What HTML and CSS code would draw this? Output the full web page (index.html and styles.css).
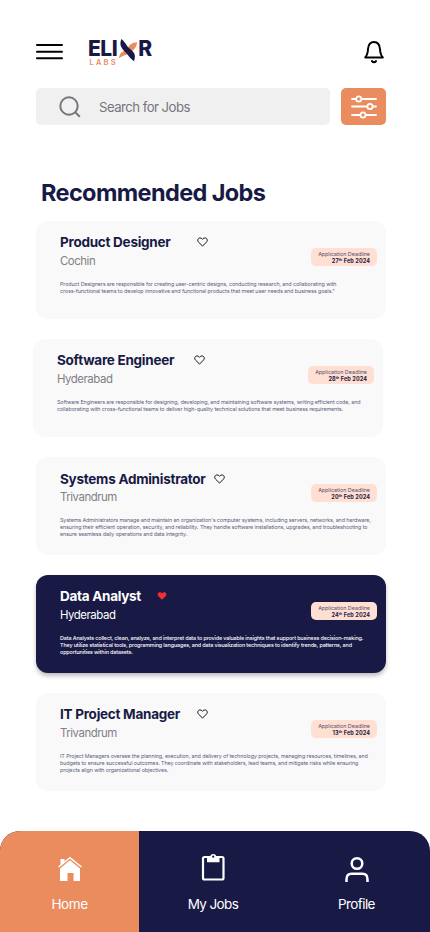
FILE: index.html
```html
<!DOCTYPE html>
<html lang="en">
<head>
<meta charset="utf-8">
<title>Elixr Labs Jobs</title>
<link rel="stylesheet" href="styles.css">
</head>
<body>
<svg class="defs" aria-hidden="true"><symbol id="heart" viewBox="0 0 12 11"><path d="M6 10 1.7 5.7C-.2 3.7 1 1 3.3 1 4.600 1 5.500 1.700 6 2.600 6.500 1.700 7.400 1 8.700 1 11 1 12.200 3.700 10.300 5.700Z"/></symbol></svg>
<header class="top">
  <svg class="menu" viewBox="0 0 27 17"><path d="M1 2h25M1 8.700h25M1 15.300h25"/></svg>
  <div class="logo">
    <div class="word"><span>ELI</span><svg class="x" viewBox="0 0 19 22"><path class="o" d="M18.300 3.200C13 3.500 10.500 5.500 9 9L5 12C2 13.500 .5 15 0 19.300 2.500 17 5 16.500 8 15.500L13.500 11.500C16.500 9.500 17.500 7 18.300 3.200Z"/><path class="n" d="M2.300 0C5 2 6.500 4.500 8.500 7.500 11 10.500 14 11.500 15.500 15 16.300 17.500 15.800 20 15 22.200 12.500 20.500 10.500 18.500 8.500 15.500 6 12.500 3.500 11 2 7.500 1 5 1.500 2.500 2.300 0Z"/></svg><span>R</span></div>
    <div class="labs">LABS</div>
  </div>
  <svg class="bell" viewBox="0 0 20 23"><path d="M1.200 16.400h17.600c-1.600-1.600-2.200-3.200-2.500-5.500L16 8C15.600 3.700 13.600 1.100 10 1.100S4.400 3.700 4 8l-.3 2.900c-.3 2.300-.9 3.900-2.500 5.500ZM8 20.100c1 1.500 3 1.500 4 0"/></svg>
</header>
<div class="searchrow">
  <div class="search">
    <svg viewBox="0 0 22 22"><circle cx="10" cy="10" r="8.700"/><path d="m16.200 16.200 4.600 4.600"/></svg>
    <span>Search for Jobs</span>
  </div>
  <div class="filter"><svg viewBox="0 0 26 23"><path d="M1 4h24M1 11.500h24M1 20h24"/><circle cx="7.700" cy="4" r="2.600"/><circle cx="19" cy="11.500" r="2.600"/><circle cx="12" cy="20" r="2.600"/></svg></div>
</div>
<h1>Recommended Jobs</h1>
<main class="jobs">
  <article class="card">
    <div class="head">
      <div><div class="title g1"><h2>Product Designer</h2><svg class="heart"><use href="#heart"/></svg></div><p class="city">Cochin</p></div>
      <div class="badge">Application Deadline<b>27<sup>th</sup> Feb 2024</b></div>
    </div>
    <p class="desc">Product Designers are responsible for creating user-centric designs, conducting research, and collaborating with<br>cross-functional teams to develop innovative and functional products that meet user needs and business goals."</p>
  </article>
  <article class="card shifted">
    <div class="head">
      <div><div class="title g2"><h2>Software Engineer</h2><svg class="heart"><use href="#heart"/></svg></div><p class="city">Hyderabad</p></div>
      <div class="badge">Application Deadline<b>28<sup>th</sup> Feb 2024</b></div>
    </div>
    <p class="desc">Software Engineers are responsible for designing, developing, and maintaining software systems, writing efficient code, and<br>collaborating with cross-functional teams to deliver high-quality technical solutions that meet business requirements.</p>
  </article>
  <article class="card low">
    <div class="head">
      <div><div class="title g3"><h2>Systems Administrator</h2><svg class="heart"><use href="#heart"/></svg></div><p class="city">Trivandrum</p></div>
      <div class="badge">Application Deadline<b>20<sup>th</sup> Feb 2024</b></div>
    </div>
    <p class="desc">Systems Administrators manage and maintain an organization's computer systems, including servers, networks, and hardware,<br>ensuring their efficient operation, security, and reliability. They handle software installations, upgrades, and troubleshooting to<br>ensure seamless daily operations and data integrity.</p>
  </article>
  <article class="card active">
    <div class="head">
      <div><div class="title g4"><h2>Data Analyst</h2><svg class="heart"><use href="#heart"/></svg></div><p class="city">Hyderabad</p></div>
      <div class="badge">Application Deadline<b>24<sup>th</sup> Feb 2024</b></div>
    </div>
    <p class="desc">Data Analysts collect, clean, analyze, and interpret data to provide valuable insights that support business decision-making.<br>They utilize statistical tools, programming languages, and data visualization techniques to identify trends, patterns, and<br>opportunities within datasets.</p>
  </article>
  <article class="card">
    <div class="head">
      <div><div class="title g5"><h2>IT Project Manager</h2><svg class="heart"><use href="#heart"/></svg></div><p class="city">Trivandrum</p></div>
      <div class="badge">Application Deadline<b>13<sup>th</sup> Feb 2024</b></div>
    </div>
    <p class="desc">IT Project Managers oversee the planning, execution, and delivery of technology projects, managing resources, timelines, and<br>budgets to ensure successful outcomes. They coordinate with stakeholders, lead teams, and mitigate risks while ensuring<br>projects align with organizational objectives.</p>
  </article>
</main>
<nav class="nav">
  <div class="tab on"><svg viewBox="0 0 28 28"><path class="fill" d="M4 13.500 14 5.200l10 8.300V26h-6.500v-8h-6v8H4Z"/><path class="fill" d="M4.500 4h4v4L4.500 11Z"/><path class="roof" d="M2.500 12 14 2.700 25.500 12"/></svg><span class="home">Home</span></div>
  <div class="tab"><svg class="clip" viewBox="0 0 28 28"><rect x="4" y="4" width="20.500" height="22.500" rx="1.500"/><path class="fill" d="M8 3.500h3.200c.5-3.300 5.600-3.300 6.100 0h3.200V9.200H8Z"/><circle class="hole" cx="14.200" cy="3.700" r="1.100"/></svg><span>My Jobs</span></div>
  <div class="tab"><svg viewBox="0 0 28 28"><circle cx="14" cy="8.500" r="5.300"/><path d="M3.500 27v-2.500c0-3.500 1.600-5.700 5-5.700h11c3.400 0 5 2.200 5 5.700V27"/></svg><span>Profile</span></div>
</nav>
</body>
</html>
```
FILE: styles.css
```css
*{box-sizing:border-box}
body{margin:0;width:430px;height:932px;background:#fff;color:#181a45;font-family:Inter,"Liberation Sans",sans-serif;overflow:hidden;display:flex;flex-direction:column}
h1,h2,p{margin:0}
svg{display:block;flex:none;overflow:visible}
.defs{width:0;height:0}
.top{height:88px;padding:38px 46px 0 36px;display:flex;align-items:flex-start}
.menu{width:27px;height:17px;margin-top:5px;stroke:#000;stroke-width:2;stroke-linecap:round}
.logo{margin-left:25px;width:70px}
.word{display:flex;height:21px;font-size:21px;line-height:22px;font-weight:800;letter-spacing:-.5px}
.x{width:19px;height:22px;margin:.5px 0 0 2px}
.x .o{fill:#ea8c5e}
.x .n{fill:#181a45}
.labs{font-size:7.500px;line-height:8px;letter-spacing:2.200px;color:#ea8c5e;font-weight:600;margin-left:1.500px}
.bell{width:20px;height:23px;margin:3px 0 0 auto;fill:none;stroke:#000;stroke-width:2;stroke-linecap:round;stroke-linejoin:round}
.searchrow{display:flex;gap:11px;padding:0 44px 0 36px;height:37px}
.search{width:294px;background:#f0f0f0;border-radius:5px;display:flex;align-items:center;padding-left:23px;color:#75767d;font-size:13.200px;letter-spacing:-.54px;gap:18px}
.search svg{width:22px;height:22px;fill:none;stroke:#75767d;stroke-width:2}
.filter{width:45px;background:#ea8c5e;border-radius:5px;display:flex;align-items:center;justify-content:center}
.filter svg{width:26px;height:23px;stroke:#fff;stroke-width:1.800;fill:#ea8c5e;stroke-linecap:round}
h1{font-size:23.500px;line-height:30px;font-weight:650;letter-spacing:-.62px;margin:53px 0 13px 41px}
.jobs{display:flex;flex-direction:column;gap:20px;padding-left:36px}
.card{width:350px;height:98px;background:#f9f9f9;border-radius:12px;padding:12px 9px 0 24px}
.card.shifted{margin-left:-3px}
.card.low .title{padding-top:1px;height:19px}
.card.low .city{margin-top:1px}
.head{display:flex;justify-content:space-between;height:36px}
.title{display:flex;align-items:center;height:18px}
h2{font-size:13.500px;line-height:18px;font-weight:650;letter-spacing:-.26px;white-space:nowrap}
.heart{width:11px;height:10px;fill:none;stroke:#111;stroke-width:1.100}
.g1{gap:26px}.g2{gap:19.500px}.g3{gap:8.500px}.g4{gap:16px}.g5{gap:17px}
.city{font-size:11.400px;line-height:16px;letter-spacing:-.45px;color:#808086;margin-top:2px}
.badge{width:66px;height:18px;margin-top:15px;background:#ffdfd2;border-radius:5px;padding:2.500px 7px 0 0;font-size:5.400px;line-height:7px;letter-spacing:-.03px;text-align:right;white-space:nowrap;color:#54506e}
.badge b{display:block;font-size:5.500px;letter-spacing:.1px;font-weight:650;color:#181a45}
.badge sup{font-size:3.500px;line-height:0;vertical-align:2px}
.desc{font-size:5.400px;line-height:7px;letter-spacing:-.102px;color:#5c5e80;margin-top:11.500px;white-space:nowrap}
.active{background:#181a45;color:#fff;box-shadow:0 3px 4px rgba(0,0,0,.25)}
.active .city,.active .desc{color:#fff}
.active h2{font-weight:700;letter-spacing:-.28px}
.active .desc{font-weight:500;letter-spacing:-.122px}
.active .heart{fill:#f03030;stroke:none;width:10px}
.nav{display:grid;grid-template-columns:139px 148px 139px;height:101px;margin-top:40px;border-radius:20px 20px 0 0;overflow:hidden;background:#181a45;color:#fff}
.tab{display:flex;flex-direction:column;align-items:center;padding-top:24px;font-size:13.500px;line-height:18px;letter-spacing:-.6px}
.tab.on{background:#ea8c5e}
.tab svg{width:28px;height:28px;fill:none;stroke:#fff;stroke-width:2.500}
.tab .clip{margin:-2px 0 2px;stroke-width:2.200}
.tab .fill{fill:#fff;stroke:none}
.tab .roof{stroke-width:1.500}
.tab .hole{fill:#181a45;stroke:none}
.tab span{margin-top:12px}
.tab .home{letter-spacing:-.4px}
```
